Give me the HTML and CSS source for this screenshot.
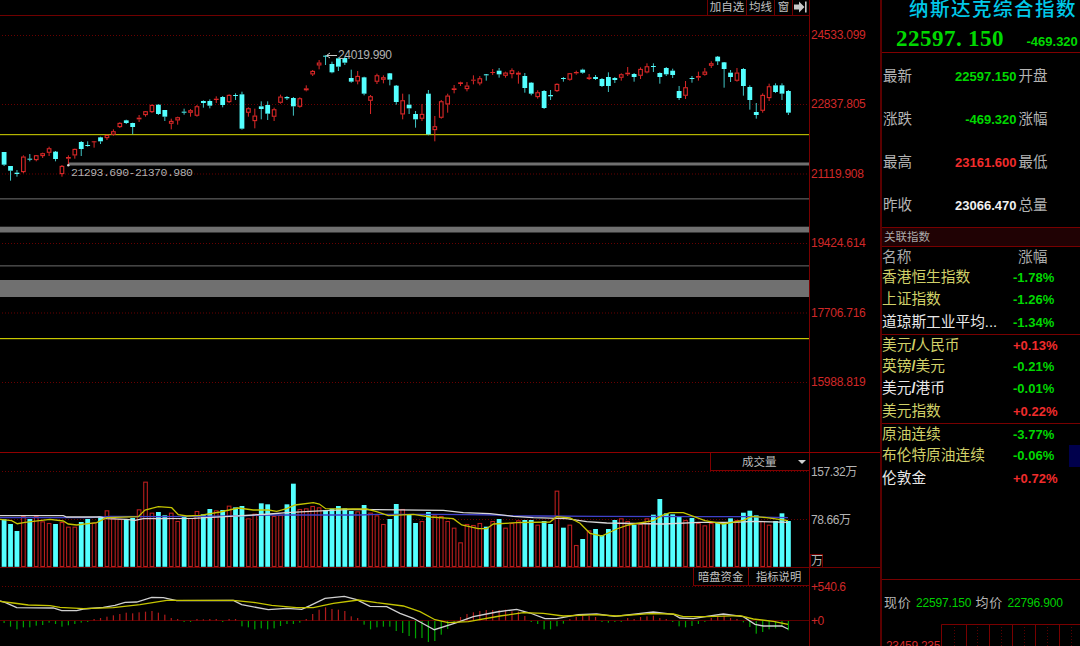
FILE: index.html
```html
<!DOCTYPE html>
<html lang="zh-CN">
<head>
<meta charset="utf-8">
<title>纳斯达克综合指数</title>
<link rel="stylesheet" href="styles.css">
</head>
<body>
<div class="terminal">
  <main class="charts">
    <section class="panel price-panel">
      <div class="plot">
        <div class="toolbar">
          <span class="tool tool-add">加自选</span><span class="tool tool-ma">均线</span><span class="tool tool-win">窗</span><span class="tool tool-end"><svg width="14" height="12" viewBox="0 0 14 12"><path d="M0 3.5h5V0.5L10.5 6 5 11.5v-3H0z" fill="#c8c8c8"/><path d="M11 0.5h1.6v11H11z" fill="#c8c8c8"/></svg></span>
        </div>
        <svg class="canvas" id="price" width="809" height="435" viewBox="0 17 809 435"></svg>
      </div>
      <div class="axis price-axis"><span>24533.099</span><span>22837.805</span><span>21119.908</span><span>19424.614</span><span>17706.716</span><span>15988.819</span></div>
    </section>
    <section class="panel volume-panel">
      <div class="plot"><svg class="canvas" id="volume" width="809" height="114" viewBox="0 453 809 114"></svg>
        <div class="selector">成交量<i class="caret"></i></div>
      </div>
      <div class="axis volume-axis"><span class="v-top">157.32万</span><span class="v-mid">78.66万</span><span class="unit">万</span></div>
    </section>
    <section class="panel macd-panel">
      <div class="plot"><svg class="canvas" id="macd" width="809" height="78" viewBox="0 568 809 78"></svg>
        <div class="tabs"><span class="tab-dark">暗盘资金</span><span class="tab-help">指标说明</span></div>
      </div>
      <div class="axis macd-axis"><span>+540.6</span><span>+0</span></div>
    </section>
  </main>
  <aside class="quote">
    <header class="head">
      <h1>纳斯达克综合指数</h1>
      <div class="head-price"><span class="big">22597<i>.</i>150</span><b class="num">-469.320</b></div>
    </header>
    <div class="stats">
      <div class="stat"><span>最新</span><b class="num down">22597.150</b><span>开盘</span></div>
      <div class="stat"><span>涨跌</span><b class="num down">-469.320</b><span>涨幅</span></div>
      <div class="stat"><span>最高</span><b class="num up">23161.600</b><span>最低</span></div>
      <div class="stat"><span>昨收</span><b class="num flat">23066.470</b><span>总量</span></div>
    </div>
    <div class="related-title">关联指数</div>
    <div class="related">
      <div class="row row-head"><span>名称</span><span>涨幅</span></div>
      <div class="row"><span>香港恒生指数</span><b class="num down">-1.78%</b></div>
      <div class="row"><span>上证指数</span><b class="num down">-1.26%</b></div>
      <div class="row white"><span>道琼斯工业平均...</span><b class="num down">-1.34%</b></div>
      <div class="row split"><span>美元<em>/</em>人民币</span><b class="num up">+0.13%</b></div>
      <div class="row"><span>英镑<em>/</em>美元</span><b class="num down">-0.21%</b></div>
      <div class="row white"><span>美元<em>/</em>港币</span><b class="num down">-0.01%</b></div>
      <div class="row"><span>美元指数</span><b class="num up">+0.22%</b></div>
      <div class="row split"><span>原油连续</span><b class="num down">-3.77%</b></div>
      <div class="row"><span>布伦特原油连续</span><b class="num down">-0.06%</b><i class="thumb"></i></div>
      <div class="row white"><span>伦敦金</span><b class="num up">+0.72%</b></div>
    </div>
    <div class="intraday">
      <div class="now"><span>现价</span><b>22597.150</b><span>均价</span><b>22796.900</b></div>
      <div class="mini"><span class="mini-label">23459.235</span><svg id="grid" width="139" height="22" viewBox="941 624 139 22"></svg></div>
    </div>
  </aside>
</div>
<script src="chart.js"></script>
</body>
</html>
```
FILE: styles.css
```css
* { box-sizing: border-box; }
html, body { margin: 0; background: #000; overflow: hidden; }
body { font-family: "Liberation Sans", "Noto Sans CJK SC", sans-serif; color: #b4b4b4; }
i, em { font-style: normal; }
.terminal { display: flex; width: 1080px; height: 646px; background: #000; }
.charts { width: 882px; flex: none; border-right: 2px solid #5a0000; display: flex; flex-direction: column; }
.panel { display: flex; }
.price-panel { height: 452px; }
.volume-panel { height: 115px; border-top: 1px solid #900000; }
.macd-panel { height: 79px; border-top: 1px solid #700000; }
.plot { width: 810px; flex: none; border-right: 1px solid #780000; position: relative; }
.canvas { display: block; }
.toolbar { height: 16px; border-bottom: 1px solid #700000; display: flex; justify-content: flex-end; margin-bottom: 1px; }
.tool { border-left: 1px solid #700000; font-size: 11.5px; line-height: 15px; color: #c0c0c0; text-align: center; white-space: nowrap; height: 15px; }
.tool-add { width: 39px; }
.tool-ma { width: 28px; }
.tool-win { width: 18px; }
.tool-end { width: 17px; padding-top: 1px; line-height: 0; }
.axis { flex: 1; display: flex; flex-direction: column; font-size: 12px; letter-spacing: -0.25px; color: #d02828; padding-left: 1px; white-space: nowrap; }
.price-axis { padding-top: 1px; }
.price-axis span { height: 69.4px; line-height: 69.4px; }
.volume-axis { color: #b4b4b4; font-size: 12px; padding-left: 1px; padding-top: 9px; letter-spacing: -0.4px; }
.volume-axis .v-top { height: 20px; line-height: 20px; margin-bottom: 28px; }
.volume-axis .v-mid { height: 20px; line-height: 20px; margin-bottom: 24px; }
.unit { width: 13px; height: 14px; line-height: 12px; border: 1px solid #700000; margin-left: -1px; }
.macd-axis { padding-top: 9px; font-size: 12px; letter-spacing: -0.4px; }
.macd-axis span { height: 20px; line-height: 20px; margin-bottom: 14px; }
.selector { position: absolute; right: 0; top: 0; width: 99px; height: 18px; background: #000; border: 1px solid #800000; border-width: 0 0 1px 1px; font-size: 11.5px; line-height: 18px; color: #bbb; padding-left: 31px; }
.caret { position: absolute; right: 3px; top: 7px; border: 4px solid transparent; border-top-color: #d0d0d0; border-bottom: 0; }
.tabs { position: absolute; right: 0; top: 0; display: flex; height: 18px; background: #000; border-bottom: 1px solid #700000; font-size: 11.3px; line-height: 18px; color: #c0c0c0; }
.tabs span { border-left: 1px solid #800000; white-space: nowrap; }
.tab-dark { width: 55px; padding-left: 4px; }
.tab-help { width: 61px; padding-left: 7px; }

.quote { flex: 1; min-width: 0; overflow: hidden; display: flex; flex-direction: column; }
.head { height: 53px; flex: none; border-bottom: 1px solid #800000; }
.head h1 { margin: 0 0 0 27px; height: 24px; line-height: 19px; font-size: 19.5px; font-weight: 500; letter-spacing: 1.5px; color: #00c8e8; white-space: nowrap; }
.head-price { display: flex; color: #00d800; padding-left: 14px; height: 28px; white-space: nowrap; }
.big { font: bold 23px/29px "Liberation Serif", serif; letter-spacing: 0.5px; width: 130.5px; }
.big i { display: inline-block; width: 12px; }
.head-price .num { line-height: 36px; }
.num { font-family: "Liberation Sans", sans-serif; font-weight: bold; font-size: 13px; letter-spacing: 0; }
.down { color: #00d800; }
.up { color: #f02c2c; }
.flat { color: #f0f0f0; }
.stats { height: 174px; flex: none; padding-top: 2px; }
.stat { height: 43px; line-height: 43px; display: grid; grid-template-columns: 50px 83.5px 60px; font-size: 14.5px; padding-left: 1px; }
.stat .num { text-align: right; }
.stat .num + span { padding-left: 2px; }
.related-title { height: 20px; flex: none; border: 1px solid #780000; border-width: 1px 0; background: #200204; color: #aaa; font-size: 11.5px; line-height: 18px; padding-left: 2px; }
.related { height: 332px; flex: none; }
.row { height: 22.3px; line-height: 21px; display: flex; font-size: 14.7px; color: #d0d068; position: relative; white-space: nowrap; }
.row span { width: 131px; flex: none; }
.row-head { height: 20px; line-height: 20px; color: #aaa; }
.row-head span:first-child { width: 136px; }
.row em { font-weight: bold; }
.split { border-top: 1px solid #780000; }
.row.white { color: #e8e8e8; }
.thumb { position: absolute; right: 0; top: 0; width: 11px; height: 22px; background: #00004c; }
.intraday { flex: 1; border-top: 1px solid #780000; }
.now { display: flex; height: 44px; line-height: 46px; padding-left: 2px; font-size: 13px; white-space: nowrap; }
.now span { width: 32px; letter-spacing: 0.7px; }
.now b { width: 59.5px; font-weight: normal; font-size: 12px; letter-spacing: -0.15px; color: #00d000; }
.mini { display: flex; height: 22px; }
.mini-label { width: 59px; padding-left: 4px; font-size: 12px; letter-spacing: -0.3px; line-height: 44px; color: #d02828; }
```
FILE: chart.js
```js
// Each row: colour (c = falling, r = rising), high, body top, body bottom, low, volume top, MACD bar end.
// Vertical values are in thirds of a pixel from the top of their pane.
const rows = `
c 336 336 374 378 208 519|c 378 378 392 422 222 530|c 390 398 402 410 243 538|r 346 350 396 400 198 532|c 342 356 359 364 207 532|r 345 346 360 364 198 527
r 338 340 348 354 214 525|r 320 325 338 348 219 518|c 333 335 357 364 222 522|r 375 378 402 410 216 530|r 346 351 356 372 230 526|r 326 327 346 356 230 522
c 303 306 327 348 216 518|c 304 315 317 318 207 513|r 304 304 307 323 218 507|c 290 292 304 312 199 504|r 284 285 294 300 181 500|r 268 274 284 287 205 496
r 247 249 261 263 207 492|c 239 241 249 252 207 488|c 248 249 261 283 204 490|r 225 233 238 246 178 487|r 213 214 225 230 95 485|r 193 195 216 219 188 483
c 193 194 222 224 186 488|c 210 210 230 243 196 494|r 236 243 251 268 188 504|r 230 232 241 254 213 507|c 206 215 218 224 199 513|r 207 211 218 230 204 513
r 195 199 227 228 183 507|c 181 183 189 203 193 508|c 178 183 197 205 177 507|r 169 176 180 189 181 507|c 168 171 195 202 180 513|r 163 165 186 188 167 507
c 160 165 168 180 172 507|c 155 163 266 268 168 529|r 202 205 218 230 205 532|r 206 227 243 265 191 538|c 184 199 207 238 160 535|c 184 195 221 240 163 538
r 203 208 230 243 198 535|r 164 170 188 190 195 528|c 168 171 175 180 163 522|c 171 174 199 227 101 522|r 172 175 200 203 177 518|r 136 145 151 152 175 507
r 90 93 103 108 168 492|r 60 68 76 88 172 479|c 46 47 50 75 180 472|c 65 72 97 99 176 477|c 52 55 80 93 168 479|c 50 54 68 75 175 483
c 89 114 125 128 183 499|r 93 108 124 133 184 504|c 110 112 161 166 165 524|r 165 169 182 222 188 538|r 101 106 125 132 196 532|r 106 112 119 130 222 530
c 99 100 119 136 207 530|c 135 137 186 194 162 543|r 161 181 223 238 177 549|c 163 194 205 222 193 558|c 213 222 238 263 219 565|r 192 222 236 243 213 564
c 150 161 283 284 186 576|r 228 259 270 304 196 573|r 180 184 233 235 198 554|r 161 167 193 218 213 537|r 135 145 150 160 233 516|r 125 127 132 138 277 501
r 126 137 147 154 222 492|r 106 119 122 133 225 487|r 108 115 130 136 219 483|c 102 103 106 122 230 480|r 87 96 98 105 213 480|c 84 92 103 113 207 480
r 95 98 107 113 233 479|r 85 91 102 115 219 484|r 94 98 104 131 211 485|c 99 108 144 158 210 498|c 127 128 161 166 210 515|r 151 157 171 176 224 522
c 150 153 204 206 213 538|c 150 165 169 180 222 538|r 130 132 153 155 122 529|c 111 114 117 125 233 521|r 99 100 119 122 224 507|r 92 96 100 104 285 501
c 86 89 98 101 267 497|r 102 112 117 120 241 498|c 105 111 117 118 237 501|c 114 117 138 139 255 513|c 97 111 138 156 237 518|c 111 114 120 129 210 516
r 100 103 113 122 205 513|r 81 98 103 108 213 504|c 99 102 111 125 225 507|r 82 87 107 117 222 501|r 70 79 97 99 205 499|c 70 78 80 96 194 497
c 97 99 111 131 147 504|c 81 84 103 108 190 507|c 86 92 105 114 193 513|c 138 153 174 180 201 529|r 123 142 167 177 210 532|c 108 114 117 128 204 528
r 95 108 113 122 219 522|r 84 95 104 107 226 516|r 64 70 77 84 219 504|c 48 50 64 75 218 499|c 66 67 87 143 218 497|c 90 98 111 126 205 504
r 84 98 122 125 210 507|c 84 87 138 167 188 517|c 136 141 180 209 182 531|c 189 216 225 236 196 551|r 160 165 212 218 213 546|r 131 139 174 183 224 538
c 130 136 156 159 213 535|c 130 136 161 180 190 531|c 150 153 218 225 213 541`.trim().split(/[|\n]/).map(s => s.split(' ').map((v, i) => i ? +v : v));

const UP = '#dc2828', DOWN = '#54ffff';
const rect = (x, y, w, h, a) => `<rect x="${x.toFixed(2)}" y="${y.toFixed(2)}" width="${w}" height="${Math.max(h, 1).toFixed(2)}" ${a}/>`;
const dots = y => `<path d="M2 ${y}H808" stroke="#680000" stroke-dasharray="1 2"/>`;
const line = (pts, top, color) => {
  const n = pts.trim().split(/\s+/).map(Number);
  let s = '';
  for (let i = 0; i < n.length; i += 2) s += `${(n[i] / 3).toFixed(1)},${(top + n[i + 1] / 3).toFixed(1)} `;
  return `<polyline points="${s}" fill="none" stroke="${color}" stroke-width="1.3"/>`;
};

let price = [35.5, 104.5, 174, 243.5, 313, 382.5].map(dots).join('');
price += rect(0, 134, 809, 1.2, 'fill="#b4b400"') + rect(0, 338, 809, 1.2, 'fill="#c8c800"');
price += rect(68, 162.5, 741, 3, 'fill="#707070"') + rect(0, 198, 809, 1.6, 'fill="#484848"');
price += rect(0, 226.7, 809, 5.8, 'fill="#707070"') + rect(0, 265, 809, 1.6, 'fill="#444"') + rect(0, 280, 809, 17, 'fill="#707070"');
let volume = dots(471.5) + dots(519.5), macd = dots(586.5) + '<path d="M0 620.5H809" stroke="#5c0000"/>';

rows.forEach(([c, hi, t, b, lo, v, m], i) => {
  const x = 4.1 + i * 6.4287, y = n => 40 + n / 3, col = c === 'c' ? DOWN : UP;
  const top = y(t), bot = y(b), solid = c === 'c' || b - t < 7;
  const wick = `fill="${c === 'c' ? '#40c4c4' : UP}"`;
  price += rect(x - 0.5, y(hi), 1, top - y(hi), wick) + rect(x - 0.5, bot, 1, y(lo) - bot, wick);
  price += solid ? rect(x - 2.4, top, 4.8, bot - top, `fill="${col}"`)
                 : rect(x - 1.8, top + 0.4, 3.6, bot - top - 0.8, `fill="#000" stroke="${UP}" stroke-width="1.1"`);
  const vt = 450 + v / 3;
  volume += c === 'c' ? rect(x - 2.4, vt, 4.8, 566.8 - vt, `fill="${DOWN}"`)
                      : rect(x - 1.8, vt + 0.5, 3.6, 566 - vt, 'fill="#000" stroke="#b81e1e" stroke-width="1.1"');
  const end = 450 + m / 3;
  macd += m > 511 ? rect(x - 0.6, 621, 1.2, end - 621, 'fill="#00a400"')
                  : rect(x - 0.6, end, 1.2, 620.5 - end, 'fill="#b01c1c"');
});

price += '<path d="M327 55.5H337M330 53L326.5 55.5 330 58" fill="none" stroke="#c8c8c8"/><circle cx="68.3" cy="165.3" r="1.2" fill="#ddd"/>';
price += '<text x="338" y="59" font-size="12" textLength="54" fill="#b0b0b0">24019.990</text>';
price += '<text x="71" y="175.5" font-family="Liberation Mono" font-size="11.5" textLength="122" fill="#b0b0b0">21293.690-21370.980</text>';

volume += line('0 203 270 203 330 199 500 200 700 198 810 195 1080 195 1130 193 1300 193 1400 194 1490 195 1540 198 1620 198 1800 199 2100 200 2240 200 2364 203', 450, '#4040c8');
volume += line('0 197 190 197 200 201 300 201 320 206 380 208 405 211 430 206 580 205 690 199 760 195 810 192 860 188 930 184 1060 178 1330 181 1390 188 1470 191 1540 199 1600 203 1700 206 1760 215 1820 219 1990 222 2100 217 2200 217 2260 214 2364 217', 450, '#d8d8d8');
volume += line('0 208 35 212 52 221 75 217 150 208 190 213 205 222 230 225 290 218 320 203 415 200 435 180 475 170 515 173 535 194 560 198 600 196 660 186 715 174 760 180 805 180 830 184 860 176 885 165 940 158 958 162 977 176 1050 177 1100 177 1130 185 1165 197 1240 193 1290 201 1360 206 1385 225 1435 236 1460 236 1480 222 1550 218 1650 216 1670 200 1710 204 1740 220 1770 250 1805 258 1850 237 1885 225 1960 212 1985 197 2010 188 2050 188 2115 212 2170 222 2230 211 2255 199 2300 203 2364 212', 450, '#c4c400');
macd += line('0 453 15 457 50 473 160 474 185 482 230 482 250 477 310 472 345 466 375 457 410 456 455 442 490 443 530 452 700 451 725 464 805 479 860 475 905 478 930 467 975 445 1033 439 1070 449 1110 469 1160 470 1200 490 1240 505 1303 539 1370 518 1420 500 1490 486 1550 478 1590 489 1635 506 1670 506 1735 494 1790 492 1845 499 1960 486 2020 493 2040 504 2080 506 2120 499 2170 492 2230 500 2265 523 2290 528 2345 528 2364 537', 450, '#d0d0d0');
macd += line('0 454 40 459 85 465 150 467 180 472 250 476 340 473 420 464 500 451 700 451 760 457 815 466 890 473 940 473 1000 460 1075 450 1130 458 1210 468 1260 485 1305 509 1345 518 1405 515 1500 498 1570 488 1630 490 1690 498 1790 494 1850 498 1950 491 2020 492 2050 500 2120 500 2220 497 2260 507 2320 514 2364 523', 450, '#c4c400');

document.getElementById('price').innerHTML = price;
document.getElementById('volume').innerHTML = volume;
document.getElementById('macd').innerHTML = macd;

let grid = '<path d="M941.5 646V624.5H1080" fill="none" stroke="#780000"/>';
[966.5, 989.5, 1012.5, 1035.5, 1059.5].forEach(x => grid += `<path d="M${x} 624V646" stroke="#780000"/>`);
[954.5, 977.5, 1001.5, 1024.5, 1047.5, 1071.5].forEach(x => grid += `<path d="M${x} 627V646" stroke="#580000" stroke-dasharray="1 2"/>`);
document.getElementById('grid').innerHTML = grid;
```
